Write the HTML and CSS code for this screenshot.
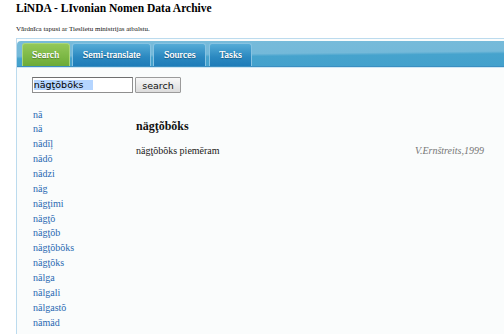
FILE: index.html
```html
<!DOCTYPE html>
<html lang="lv">
<head>
    <meta charset="UTF-8">
    <title>LiNDA - LIvonian Nomen Data Archive</title>
    <link rel="stylesheet" href="styles.css">
</head>
<body>
    <div class="page">
        <h1 class="site-title">LiNDA - LIvonian Nomen Data Archive</h1>
        <p class="site-note">Vārdnīca tapusi ar Tieslietu ministrijas atbalstu.</p>

        <div class="panel">
            <ul class="tabs">
                <li class="tab active">Search</li>
                <li class="tab">Semi-translate</li>
                <li class="tab">Sources</li>
                <li class="tab">Tasks</li>
            </ul>

            <div class="panel-body">
                <form class="search-form" onsubmit="return false">
                    <div class="search-input"><span class="sel">nägţõbõks</span></div>
                    <button class="search-btn" type="submit">search</button>
                </form>

                <div class="results">
                    <ul class="word-list">
                        <li><a href="#">nā</a></li>
                        <li><a href="#">nä</a></li>
                        <li><a href="#">nādīļ</a></li>
                        <li><a href="#">nādō</a></li>
                        <li><a href="#">nādzi</a></li>
                        <li><a href="#">näg</a></li>
                        <li><a href="#">nägţimi</a></li>
                        <li><a href="#">nägţõ</a></li>
                        <li><a href="#">nägţõb</a></li>
                        <li><a href="#">nägţõbõks</a></li>
                        <li><a href="#">nägţõks</a></li>
                        <li><a href="#">nālga</a></li>
                        <li><a href="#">nālgali</a></li>
                        <li><a href="#">nālgastõ</a></li>
                        <li><a href="#">nāmäd</a></li>
                    </ul>

                    <div class="entry">
                        <h2 class="entry-word">nägţõbõks</h2>
                        <div class="entry-row">
                            <span class="example">nägţõbõks piemēram</span>
                            <span class="source">V.Ernštreits,1999</span>
                        </div>
                    </div>
                </div>
            </div>
        </div>
    </div>
</body>
</html>
```

FILE: styles.css
```css
html, body {
    margin: 0;
    overflow: hidden;
    background: #fff;
}

body {
    font-family: "Liberation Serif", "Times New Roman", serif;
    color: #111;
}

.page {
    width: 760px;
    padding-left: 16px;
}

.site-title {
    margin: 2px 0 0 0;
    font-size: 11.5px;
    line-height: 13px;
    font-weight: bold;
    color: #000;
}

.site-note {
    margin: 10px 0 0 0;
    font-size: 7px;
    line-height: 9px;
    color: #111;
}

.panel {
    margin-top: 4px;
    border: 1px solid #bcdbee;
    border-right: none;
    padding-top: 2px;
    background: #fafcfc;
    min-height: 400px;
}

/* tab bar */
.tabs {
    list-style: none;
    margin: 0;
    padding: 2px 0 0 4.5px;
    height: 23px;
    display: flex;
    gap: 2.5px;
    background: linear-gradient(179.4deg, #77bbda 0%, #74b9d9 46%, #46a3cd 54%, #42a0cc 100%);
    border-bottom: 1px solid #3a8fc2;
    border-top-left-radius: 4px;
    box-shadow: 0 1px 0 #cfe6f3;
}

.tab {
    box-sizing: border-box;
    height: 23px;
    padding: 0 9.5px;
    border: 1px solid #86c3e2;
    border-bottom: none;
    border-radius: 3px 3px 0 0;
    background: linear-gradient(#55acd7, #2a88c0 60%, #1f7db9);
    color: #fff;
    font-size: 10px;
    line-height: 22px;
    text-shadow: 0 1px 1px rgba(0, 0, 0, 0.4), 0 0 0.5px #fff;
    cursor: pointer;
}
.tab.active {
    border-color: #a9d67b;
    background: linear-gradient(#93c85a, #7bb744 60%, #6caa37);
}

.panel-body {
    padding: 10px 0 0 15px;
}

/* search */
.search-form {
    display: flex;
    gap: 2px;
    margin: 0;
    height: 16px;
}

.search-input {
    box-sizing: border-box;
    width: 101px;
    height: 16px;
    border: 1px solid #8f8f8f;
    border-top-color: #6f6f6f;
    background: #fff;
    padding-left: 0.7px;
    display: flex;
    align-items: center;
    font-family: "DejaVu Sans", "Lucida Grande", sans-serif;
    font-size: 9.5px;
    color: #000;
}
.sel {
    display: inline-block;
    width: 59px;
    height: 9.5px;
    line-height: 9.5px;
    background: #b5d5ff;
}

.search-btn {
    box-sizing: border-box;
    width: 46px;
    height: 16px;
    padding: 0;
    border: 1px solid #9b9b9b;
    border-radius: 1px;
    background: linear-gradient(#f8f8f8, #dcdcdc);
    font-family: "DejaVu Sans", "Lucida Grande", sans-serif;
    font-size: 9.5px;
    color: #111;
}

/* results */
.results {
    display: grid;
    grid-template-columns: 104px 348px;
    margin-top: 14.6px;
}

.word-list {
    list-style: none;
    margin: 0;
    padding: 0 0 0 1px;
    font-size: 10px;
    line-height: 14.86px;
}
.word-list a {
    color: #2a6ab2;
    text-decoration: none;
}

.entry {
    padding-top: 11.9px;
}

.entry-word {
    margin: 0;
    font-size: 12px;
    line-height: 15px;
    font-weight: bold;
    color: #111;
}

.entry-row {
    margin-top: 9px;
    display: flex;
    justify-content: space-between;
    font-size: 10px;
    line-height: 15px;
    color: #1a1a1a;
}

.source {
    font-style: italic;
    color: #777;
}
```
